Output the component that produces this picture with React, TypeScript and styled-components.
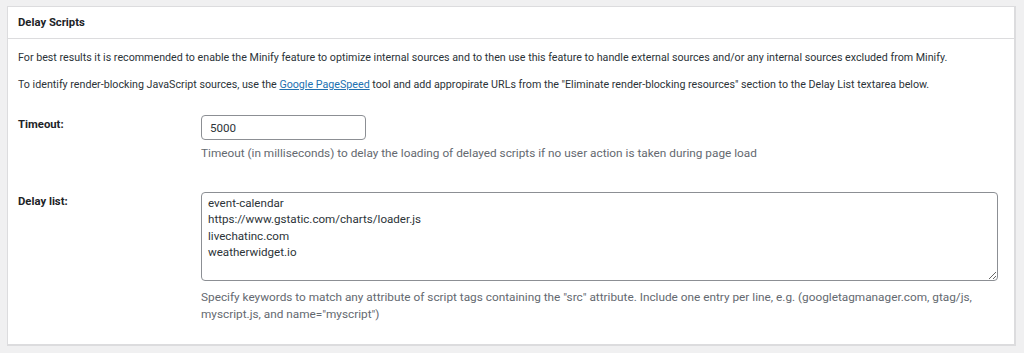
import React from "react";
import styled, { createGlobalStyle } from "styled-components";

const Global = createGlobalStyle`
  html, body { margin: 0; padding: 0; background: #f0f0f1; }
  body { font-family: Roboto, "Noto Sans", Arial, sans-serif; color: #1d2327; }
`;

const Page = styled.div`
  padding: 6px 8px 0 7px;
`;

const Card = styled.section`
  background: #fff;
  border: 1px solid #dcdcde;
  border-bottom-width: 2px;
  border-right-width: 2px;
  height: 340px;
  box-sizing: border-box;
`;

const Header = styled.h2`
  margin: 0;
  height: 31px;
  display: flex;
  align-items: center;
  padding: 0 10px;
  font-size: 11.3px;
  font-weight: 700;
  color: #1d2327;
  border-bottom: 1px solid #dcdcde;
`;

const Body = styled.div`
  padding: 10px 10px 0 10px;
`;

const Intro = styled.p`
  margin: 0 0 10px;
  font-size: 10.7px;
  line-height: 17px;
  color: #2c3338;
`;

const Link = styled.a`
  color: #2271b1;
  text-decoration: underline;
`;

const Row = styled.div<{ $top: number }>`
  display: flex;
  margin-top: ${(p) => p.$top}px;
`;

const Label = styled.label`
  width: 183px;
  flex: none;
  font-size: 11.3px;
  font-weight: 700;
  color: #1d2327;
  padding-top: 1px;
  line-height: 17px;
`;

const Field = styled.div`
  flex: 1;
  display: flex;
  flex-direction: column;
`;

const Input = styled.input`
  width: 165px;
  height: 25px;
  box-sizing: border-box;
  border: 1px solid #8c8f94;
  border-radius: 4px;
  padding: 0 8px;
  font-family: Roboto, sans-serif;
  font-size: 11.6px;
  color: #2c3338;
`;

const TextArea = styled.textarea`
  width: 797px;
  height: 89px;
  box-sizing: border-box;
  border: 1px solid #8c8f94;
  border-radius: 4px;
  padding: 2px 6px;
  font-family: Roboto, sans-serif;
  font-size: 11.6px;
  line-height: 16.3px;
  color: #2c3338;
  resize: vertical;
`;

const Description = styled.p<{ $gap: number }>`
  margin: ${(p) => p.$gap}px 0 0;
  width: 785px;
  font-size: 11.8px;
  line-height: 17px;
  color: #646970;
`;

export default function App() {
  return (
    <>
      <Global />
      <Page>
        <Card>
          <Header>Delay Scripts</Header>
          <Body>
            <Intro>
              For best results it is recommended to enable the Minify feature to optimize internal sources and to then use this feature to handle external sources and/or any internal sources excluded from Minify.
            </Intro>
            <Intro>
              To identify render-blocking JavaScript sources, use the <Link href="#">Google PageSpeed</Link> tool and add appropirate URLs from the "Eliminate render-blocking resources" section to the Delay List textarea below.
            </Intro>
            <Row $top={22}>
              <Label>Timeout:</Label>
              <Field>
                <Input defaultValue="5000" />
                <Description $gap={5}>
                  Timeout (in milliseconds) to delay the loading of delayed scripts if no user action is taken during page load
                </Description>
              </Field>
            </Row>
            <Row $top={30}>
              <Label>Delay list:</Label>
              <Field>
                <TextArea
                  defaultValue={"event-calendar\nhttps://www.gstatic.com/charts/loader.js\nlivechatinc.com\nweatherwidget.io"}
                />
                <Description $gap={8}>
                  Specify keywords to match any attribute of script tags containing the "src" attribute. Include one entry per line, e.g. (googletagmanager.com, gtag/js, myscript.js, and name="myscript")
                </Description>
              </Field>
            </Row>
          </Body>
        </Card>
      </Page>
    </>
  );
}
